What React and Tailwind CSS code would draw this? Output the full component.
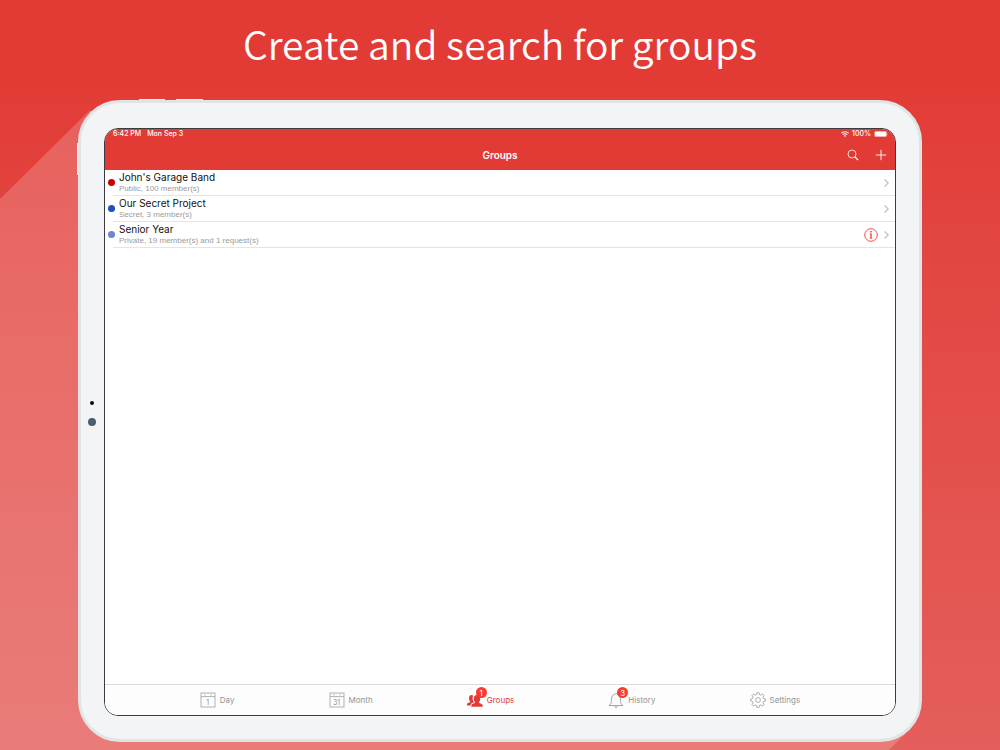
import React from "react";

const groups = [
  { name: "John's Garage Band", detail: "Public, 100 member(s)", dot: "bg-[#cc0202]" },
  { name: "Our Secret Project", detail: "Secret, 3 member(s)", dot: "bg-[#1d4fc0]" },
  { name: "Senior Year", detail: "Private, 19 member(s) and 1 request(s)", dot: "bg-[#6d86cd]", info: true },
];

function CalendarIcon({ day }) {
  return (
    <span className="relative flex h-4 w-4 items-end justify-center">
      <svg className="absolute inset-0 h-4 w-4" viewBox="0 0 16 16" fill="none" stroke="#a8a8a8" strokeWidth="0.9" aria-hidden="true">
        <rect x="1" y="1" width="14" height="14" />
        <path d="M1 4.6h14" />
        <path d="M4.2 2.8h1.4M10.4 2.8h1.4" />
      </svg>
      <span className="relative pb-px text-[7px] leading-[9px] text-[#8e8e8e]">{day}</span>
    </span>
  );
}

function PeopleIcon() {
  return (
    <svg className="h-4 w-4" viewBox="0 0 16 16" fill="#e23b36" aria-hidden="true">
      <path d="M0 13.600c0-2 .4-2.500 1.600-2.900 1.100-.35 1.500-.6 1.500-1.300C2.400 8.600 2.100 7.700 2 6.700c-.1-2.400.9-3.700 2.500-3.700.8 0 1.300.2 1.700.7-.7 1.200-.7 2.600-.4 4 .2.900.5 1.500.9 2.100 0 .6-.5.9-1.400 1.200-1.100.4-1.500 1.100-1.600 2.600z" />
      <path d="M4.300 14.800c0-2.200.6-2.700 2.100-3.200 1.200-.4 1.600-.7 1.600-1.500-.8-.9-1.200-2-1.200-3.400C6.800 4.200 8 3 10 3s3.200 1.200 3.200 3.700c0 1.400-.4 2.500-1.200 3.400 0 .8.4 1.100 1.600 1.500 1.500.5 2.200 1 2.200 3.200z" />
    </svg>
  );
}

function BellIcon() {
  return (
    <svg className="h-4 w-4" viewBox="0 0 16 16" fill="none" stroke="#8e8e8e" strokeWidth="0.8" aria-hidden="true">
      <path d="M1 13.500c1.900-1.200 2.400-2.400 2.400-4.900 0-3.700 1-5.900 3.600-6.400a1.050 1.050 0 0 1 2 0c2.600.5 3.600 2.700 3.600 6.400 0 2.500.5 3.700 2.400 4.900z" />
      <path d="M6.700 14.200c.1.900.6 1.300 1.300 1.300s1.200-.4 1.300-1.300" />
    </svg>
  );
}

function GearIcon() {
  return (
    <svg className="h-4 w-4" viewBox="0 0 16 16" fill="none" stroke="#999" strokeWidth="0.8" strokeLinejoin="round" aria-hidden="true">
      <path d="M6.900 .8h2.200l.4 1.900 1.300.5 1.700-1.100 1.500 1.500-1.100 1.700.5 1.300 1.900.4v2.100l-1.900.4-.5 1.300 1.100 1.700-1.500 1.500-1.700-1.100-1.300.5-.4 1.900H6.900l-.4-1.900-1.300-.5-1.700 1.100L2 12.500l1.100-1.700-.5-1.300-1.900-.4V7l1.900-.4.5-1.300L2 3.600l1.500-1.500 1.700 1.100 1.300-.5z" />
      <circle cx="8" cy="8" r="2.400" />
    </svg>
  );
}

function Chevron() {
  return (
    <svg className="h-2 w-[5px]" viewBox="0 0 5 8" fill="none" stroke="#bdbdc2" strokeWidth="1.100" aria-hidden="true">
      <path d="M.6.500 4.200 4 .6 7.500" />
    </svg>
  );
}

const tabs = [
  { label: "Day", icon: <CalendarIcon day="1" /> },
  { label: "Month", icon: <CalendarIcon day="31" /> },
  { label: "Groups", icon: <PeopleIcon />, badge: 1, active: true },
  { label: "History", icon: <BellIcon />, badge: 3 },
  { label: "Settings", icon: <GearIcon /> },
];

function StatusBar() {
  return (
    <div className="flex h-[10px] items-center justify-between pr-[7px] pl-2 text-[7px] leading-[10px] font-medium text-white">
      <div className="flex gap-[6px]">
        <span>6:42 PM</span>
        <span>Mon Sep 3</span>
      </div>
      <div className="flex items-center gap-[3px]">
        <svg className="h-[6px] w-2" viewBox="0 0 8 6" fill="none" stroke="white" strokeWidth="1.100" aria-hidden="true">
          <path d="M.4 2.200a5.100 5.100 0 0 1 7.200 0M1.800 3.700a3.100 3.100 0 0 1 4.400 0" />
          <path d="M4 5.900 2.900 4.800a1.600 1.600 0 0 1 2.200 0z" fill="white" stroke="none" />
        </svg>
        <span>100%</span>
        <svg className="h-[6px] w-[14px]" viewBox="0 0 14 6" aria-hidden="true">
          <rect x=".3" y=".1" width="12.600" height="5.800" rx="1.500" fill="white" fillOpacity=".45" />
          <rect x=".9" y=".7" width="11.400" height="4.600" rx="1" fill="white" />
          <path d="M13.300 2v2c.7-.2.700-1.800 0-2z" fill="white" fillOpacity=".6" />
        </svg>
      </div>
    </div>
  );
}

function NavBar() {
  return (
    <header className="grid h-[31px] grid-cols-3 items-center px-2 text-white">
      <span />
      <h2 className="text-center text-[10px] leading-4 font-semibold">Groups</h2>
      <div className="flex justify-end gap-4">
        <button type="button" aria-label="Search" className="flex h-3 w-3 items-center justify-center">
          <svg className="h-3 w-3" viewBox="0 0 12 12" fill="none" stroke="white" aria-hidden="true">
            <circle cx="5" cy="5" r="4" strokeWidth=".8" />
            <path d="m7.900 7.900 3.200 3.200" strokeWidth="1.300" />
          </svg>
        </button>
        <button type="button" aria-label="Add group" className="flex h-3 w-3 items-center justify-center">
          <svg className="h-3 w-3" viewBox="0 0 12 12" fill="none" stroke="white" strokeWidth=".9" aria-hidden="true">
            <path d="M6 .8v10.400M.8 6h10.400" />
          </svg>
        </button>
      </div>
    </header>
  );
}

function GroupRow({ group }) {
  return (
    <li>
      <div className="flex h-[25px] items-center gap-1 pr-[6px] pl-[3px]">
        <span className={`h-[7px] w-[7px] shrink-0 rounded-full ${group.dot}`} />
        <a href="#group" className="flex h-full min-w-0 flex-1 items-center justify-between">
          <span className="flex flex-col pb-px">
            <span className="text-[10px] leading-[13px] text-[#111]">{group.name}</span>
            <span className="font-['Liberation_Sans',sans-serif] text-[8px] leading-[9px] text-[#9a9a9a]">{group.detail}</span>
          </span>
          <span className="flex items-center gap-[6px]">
            {group.info && (
              <svg className="h-[14px] w-[14px]" viewBox="0 0 14 14" fill="none" stroke="#fa3a34" role="img" aria-label="Pending request">
                <circle cx="7" cy="7" r="6.300" strokeWidth=".9" />
                <path d="M7 5.500v4.700" strokeWidth="1.400" />
                <path d="M5.800 5.700H7M5.700 10.200h2.600" strokeWidth=".7" />
                <circle cx="7" cy="3.700" r=".85" fill="#fa3a34" stroke="none" />
              </svg>
            )}
            <Chevron />
          </span>
        </a>
      </div>
      <div className="ml-2 h-px bg-[#e4e4e6]" />
    </li>
  );
}

function TabBar() {
  return (
    <nav className="flex h-[31px] items-center justify-between border-t border-[#dadada] bg-[#fdfdfd] px-[12%]">
      {tabs.map((tab) => (
        <a
          key={tab.label}
          href="#tab"
          aria-current={tab.active ? "page" : undefined}
          className={`flex items-center gap-1 text-[8px] leading-3 ${tab.active ? "text-[#e23b36]" : "text-[#949494]"}`}
        >
          <span className="relative">
            {tab.icon}
            {tab.badge && (
              <span className="absolute -top-[5px] -right-1 flex h-[11px] w-[11px] items-center justify-center rounded-full bg-[#fc3a30] text-[8px] leading-none text-white">
                {tab.badge}
              </span>
            )}
          </span>
          {tab.label}
        </a>
      ))}
    </nav>
  );
}

export default function App() {
  return (
    <div className="relative isolate flex min-h-screen flex-col overflow-hidden bg-linear-to-b from-[#e23a35] from-8% to-[#e45e5b] pb-2 font-['Inter',sans-serif]">
      <svg className="absolute inset-0 -z-10 h-full w-full" viewBox="0 0 1000 750" preserveAspectRatio="none" aria-hidden="true">
        <path d="M0 199 90 110 500 400 906 733 889 750H0z" fill="white" fillOpacity=".19" />
      </svg>
      <h1 className="flex h-[100px] items-center justify-center pb-[14px] text-center font-['Noto_Sans_CJK_SC',sans-serif] text-[39px] leading-none font-[350] text-white">
        Create and search for groups
      </h1>
      <div className="relative mx-[7.8%] flex flex-1 flex-col rounded-[42px] border-[3px] border-[#e1e4e5] bg-[#f3f4f6] px-[23px] pt-[25px] pb-[23px]">
        <span className="absolute -top-1 left-[57px] h-px w-7 border-x border-[#777] bg-[#eee]" />
        <span className="absolute -top-1 left-[94px] h-px w-[29px] border-x border-[#777] bg-[#eee]" />
        <span className="absolute top-[39px] -left-1 h-[34px] w-px border-y border-[#777] bg-[#eee]" />
        <span className="absolute top-[298px] left-[9px] h-1 w-1 rounded-full bg-[#0c0c10]" />
        <span className="absolute top-[315px] left-[7px] h-2 w-2 rounded-full border-2 border-[#555a60] bg-[#2b6a94]" />
        <main className="flex flex-1 flex-col overflow-hidden rounded-[14px] border border-[#3c3c40] bg-white">
          <div className="bg-[#e23b36]">
            <StatusBar />
            <NavBar />
          </div>
          <ul className="flex-1">
            {groups.map((group) => (
              <GroupRow key={group.name} group={group} />
            ))}
          </ul>
          <TabBar />
        </main>
      </div>
    </div>
  );
}
